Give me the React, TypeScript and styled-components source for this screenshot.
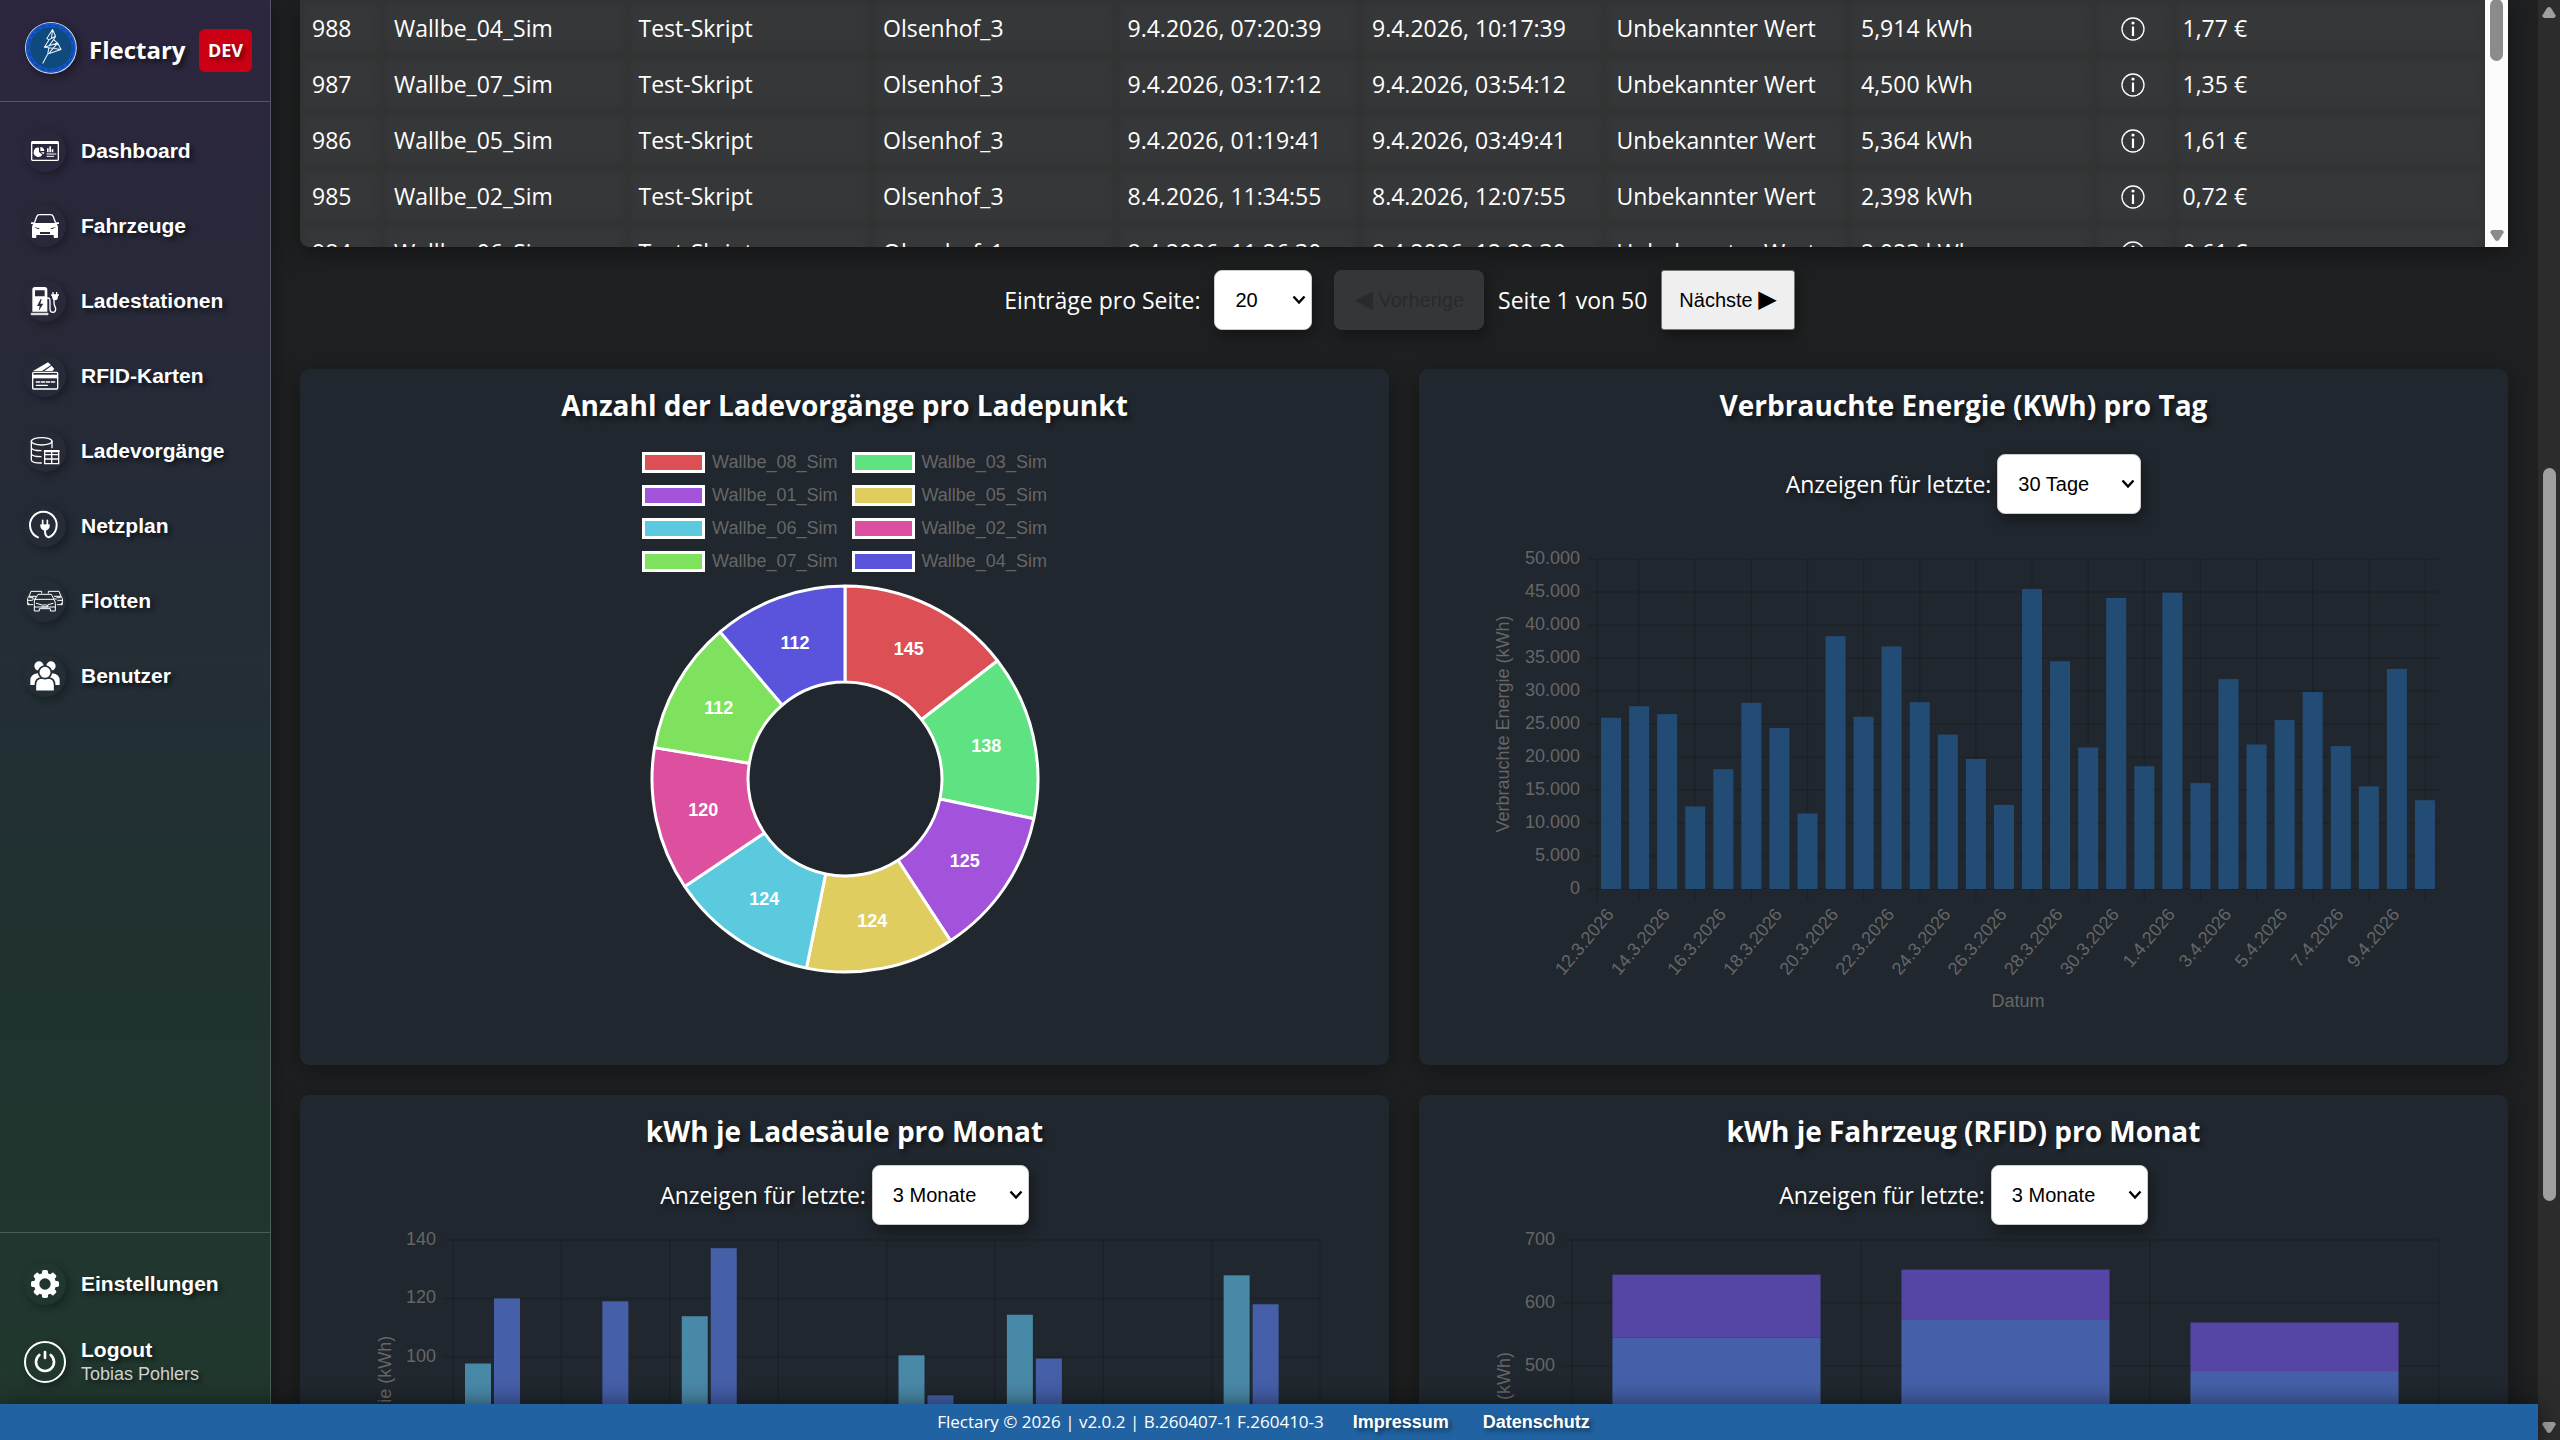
import React from "react";
import styled, { createGlobalStyle } from "styled-components";

const ui = `"Segoe UI", "Open Sans", "Noto Sans", sans-serif`;
const arial = `Arial, "Liberation Sans", sans-serif`;

const GlobalStyle = createGlobalStyle`
  *, *::before, *::after { box-sizing: border-box; }
  html, body { margin: 0; background: #1f2021; }
  body { font-family: ${ui}; font-size: 23px; line-height: 32px; color: #fff; }
`;

/* ---------- page frame ---------- */

const Page = styled.div`
  display: flex;
  height: 100vh;
  overflow: hidden;
`;

const Shell = styled.div`
  flex: 1;
  min-width: 0;
  display: flex;
  flex-direction: column;
`;

const Body = styled.div`
  flex: 1;
  min-height: 0;
  display: flex;
`;

const Footer = styled.footer`
  flex: none;
  display: flex;
  align-items: center;
  justify-content: center;
  height: 36px;
  padding-right: 6px;
  background: #2163a2;
  font-size: 17px;
  box-shadow: 0 0 24px rgba(0, 0, 0, 0.5);
  z-index: 1;
`;

const FooterLink = styled.a`
  margin-left: 29px;
  padding-right: 5px;
  color: #fff;
  font: bold 18px ${arial};
  text-decoration: none;
  text-shadow: 3px 3px 5px rgba(0, 0, 0, 0.5);
`;

const ScrollTrack = styled.div<{ $light?: boolean }>`
  flex: none;
  display: flex;
  flex-direction: column;
  align-items: center;
  width: ${(p) => (p.$light ? 23 : 22)}px;
  background: ${(p) => (p.$light ? "#fcfcfc" : "#2c2c2c")};
  color: ${(p) => (p.$light ? "#8b8b8b" : "#9f9f9f")};
`;

const ScrollThumb = styled.div<{ $grow: number }>`
  flex: ${(p) => p.$grow} 0 0;
  width: 13px;
  border-radius: 7px;
  background: currentColor;
`;

const ScrollGap = styled.div<{ $grow: number }>`
  flex: ${(p) => p.$grow} 0 0;
`;

const ScrollArrow = styled.svg`
  flex: none;
  width: 14px;
  height: 24px;
  fill: currentColor;
`;

/* ---------- sidebar ---------- */

const Sidebar = styled.aside`
  flex: none;
  width: 271px;
  display: flex;
  flex-direction: column;
  border-right: 1px solid rgba(255, 255, 255, 0.2);
  background: linear-gradient(180deg, #2c263e 0%, #262a37 30%, #222e34 50%, #20342e 80%, #21382e 100%);
  box-shadow: 0 0 20px rgba(0, 0, 0, 0.4);
  z-index: 1;
  font-family: ${arial};
`;

const Brand = styled.header`
  display: flex;
  align-items: center;
  height: 102px;
  padding: 0 0 0 25px;
  border-bottom: 1px solid rgba(255, 255, 255, 0.2);
`;

const BrandName = styled.span`
  flex: 1;
  padding: 0 0 2px 12px;
  font: bold 24px/32px ${ui};
  text-shadow: 3px 3px 5px rgba(0, 0, 0, 0.6);
`;

const DevBadge = styled.span`
  margin-right: 18px;
  padding: 0 9px;
  border-radius: 6px;
  background: #cc0014;
  font: bold 18px/43px ${ui};
  text-shadow: 3px 3px 5px rgba(0, 0, 0, 0.5);
`;

const Logo = styled.svg`
  flex: none;
  width: 52px;
  height: 52px;
  margin-bottom: 6px;
  border-radius: 50%;
  box-shadow: 3px 3px 8px rgba(0, 0, 0, 0.4);
`;

const Nav = styled.nav<{ $bottom?: boolean }>`
  display: flex;
  flex-direction: column;
  padding: ${(p) => (p.$bottom ? "13px 0 1px" : "11px 0 0")};
  margin-top: ${(p) => (p.$bottom ? "auto" : "0")};
  border-top: ${(p) => (p.$bottom ? "1px solid rgba(255, 255, 255, 0.2)" : "0")};
`;

const NavLink = styled.a<{ $tall?: boolean }>`
  display: flex;
  align-items: center;
  gap: 15px;
  height: ${(p) => (p.$tall ? 82 : 75)}px;
  padding-left: 24px;
  color: #fff;
  font-weight: bold;
  font-size: 21px;
  line-height: 24px;
  text-decoration: none;
  text-shadow: 3px 3px 5px rgba(0, 0, 0, 0.6);
`;

const IconDisc = styled.span<{ $ring?: boolean }>`
  flex: none;
  display: flex;
  align-items: center;
  justify-content: center;
  width: 42px;
  height: 42px;
  border-radius: 50%;
  border: ${(p) => (p.$ring ? "2px solid #fff" : "0")};
  box-shadow: 3px 3px 8px rgba(0, 0, 0, 0.35);

  svg { height: 28px; overflow: visible; }
`;

const UserName = styled.small`
  display: block;
  color: #cdd2cf;
  font-size: 18px;
  font-weight: normal;
`;

/* ---------- content ---------- */

const Main = styled.main`
  flex: 1;
  min-width: 0;
  overflow: hidden;
  padding: 0 30px 0 29px;
`;

const TableFrame = styled.div`
  display: flex;
  height: 248px;
  margin-top: -1px;
  overflow: hidden;
  border-radius: 0 0 0 9px;
  box-shadow: 0 6px 24px rgba(0, 0, 0, 0.4);
`;

const TableClip = styled.div`
  flex: 1;
  overflow: hidden;
`;

const Table = styled.table`
  width: 100%;
  table-layout: fixed;
  border-collapse: collapse;
`;

const Col = styled.col<{ $w?: string }>`
  width: ${(p) => p.$w ?? "auto"};
`;

const Cell = styled.td<{ $center?: boolean }>`
  height: 56px;
  padding: 2px ${(p) => (p.$center ? 14 : 12)}px 0 12px;
  background: #363738;
  box-shadow: inset 0 0 14px rgba(10, 14, 10, 0.13);
  text-align: ${(p) => (p.$center ? "center" : "left")};
  white-space: nowrap;

  svg { display: inline-block; vertical-align: -4px; }
  &:last-child { padding-left: 9px; }
`;

const Pager = styled.div`
  display: flex;
  align-items: center;
  justify-content: center;
  gap: 14px;
  padding: 23px 9px 39px 0;
`;

const PagerButton = styled.button`
  height: 60px;
  padding: 0 17px;
  border: 1px solid #767676;
  border-radius: 3px;
  background: #efefef;
  color: #000;
  font: 20px ${arial};
  box-shadow: 3px 6px 15px rgba(0, 0, 0, 0.4);

  &:disabled {
    margin-left: 8px;
    padding: 0 20px;
    border: 0;
    border-radius: 8px;
    background: #353638;
    color: #292a2b;
  }
`;

const Arrowhead = styled.span`
  font-family: "DejaVu Sans", sans-serif;
  font-size: 24px;
  line-height: 20px;
`;

const SelectBox = styled.span`
  display: inline-grid;
  align-items: center;
`;

const Select = styled.select<{ $w: number }>`
  grid-area: 1 / 1;
  appearance: none;
  width: ${(p) => p.$w}px;
  height: 60px;
  padding: 0 20px;
  border: 1px solid #ccc;
  border-radius: 8px;
  background: #fff;
  color: #000;
  font: 20px ${arial};
  box-shadow: 3px 6px 15px rgba(0, 0, 0, 0.4);
`;

const Chevron = styled.svg`
  grid-area: 1 / 1;
  justify-self: end;
  width: 14px;
  height: 10px;
  margin-right: 6px;
  pointer-events: none;
`;

const Cards = styled.div`
  display: grid;
  grid-template-columns: 1fr 1fr;
  gap: 30px;
`;

const Card = styled.section`
  min-height: 696px;
  padding-top: 18px;
  border-radius: 9px;
  background: #20272e;
  box-shadow: 0 6px 24px rgba(0, 0, 0, 0.4);
`;

const CardTitle = styled.h3`
  margin: 0;
  text-align: center;
  font-size: 28px;
  line-height: 36px;
  text-shadow: 3px 3px 5px rgba(0, 0, 0, 0.5);
`;

const Range = styled.div<{ $roomy?: boolean }>`
  display: flex;
  align-items: center;
  justify-content: center;
  gap: 6px;
  padding: ${(p) => (p.$roomy ? 31 : 16)}px 0 ${(p) => (p.$roomy ? 15 : 0)}px;
  text-shadow: 3px 3px 5px rgba(0, 0, 0, 0.5);
`;

const Chart = styled.svg`
  display: block;
  width: 100%;
  overflow: visible;
  font: 18px ${arial};

  text { fill: #666; }
`;

const Legend = styled.ul`
  display: grid;
  grid-template-columns: auto auto;
  justify-content: center;
  column-gap: 14px;
  margin: 23px 0 6px;
  padding: 0;
  list-style: none;
  font: 18px/33px ${arial};
  color: #666;
`;

const LegendItem = styled.li`
  display: flex;
  align-items: center;
  gap: 7px;
`;

const Swatch = styled.span<{ $color: string }>`
  width: 63px;
  height: 21px;
  border: 3px solid #fff;
  background: ${(p) => p.$color};
`;

const Donut = styled.svg`
  display: block;
  width: 390px;
  margin: 0 auto;
  font: bold 18px ${arial};
  text-anchor: middle;
`;

/* ---------- icons ---------- */

const line = { fill: "none", stroke: "#fff", strokeLinecap: "round", strokeLinejoin: "round" } as const;

const DashboardIcon = () => (
  <svg viewBox="0 0 84 84" fill="#fff">
    <rect x="2" y="14" width="80" height="56" rx="3" {...line} strokeWidth="4" />
    <path d="M2 14h80v7H2z" />
    <path d="M24 32v13l10 8a14 14 0 1 1-10-21z" />
    <path d="M28 30a13 13 0 0 1 12 12H28zM30 46h10a13 13 0 0 1-3 6z" />
    <path d="M48 34h5v12h-5zM55 28h5v18h-5zM62 37h5v9h-5z" />
    <path d="M48 51h27M48 58h20" {...line} strokeWidth="3" />
  </svg>
);

const CarIcon = () => (
  <svg viewBox="0 0 84 84" fill="#fff">
    <path d="M11 31 17 14Q19 8 25 8H59Q65 8 67 14L73 31" {...line} strokeWidth="4" />
    <path
      fillRule="evenodd"
      d="M0 31h9l2 2h62l2-2h9v5h-6l3 8v31a3 3 0 0 1-3 3h-7a3 3 0 0 1-3-3v-6H16v6a3 3 0 0 1-3 3H6a3 3 0 0 1-3-3V44l3-8H0zM8 45l14 7 4-3zM76 45l-14 7-4-3zM27 60v6h30v-6z"
    />
  </svg>
);

const StationIcon = () => (
  <svg viewBox="0 0 84 84" fill="#fff">
    <path
      fillRule="evenodd"
      d="M4 74V8a8 8 0 0 1 8-8h29a8 8 0 0 1 8 8v66zM12 10v18h29V10zM29 36 18 57h8l-3 15 14-22h-9l4-14z"
    />
    <path d="M2 79h49v4H2z" {...line} strokeWidth="3" />
    <path d="M49 33c8 0 8 4 8 12v20c0 8 4 11 9 11s8-4 8-10-5-10-5-17v-12" {...line} strokeWidth="4" />
    <path d="M60 22h24v4h-3c0 9-3 14-9 14s-9-5-9-14h-3zM64 15h4v8h-4zM75 15h4v8h-4z" />
  </svg>
);

const CardsIcon = () => (
  <svg viewBox="0 0 84 84" fill="#fff">
    <path d="M6 27 51 1l9 8-27 18zM40 27 62 11l8 10-6 6z" />
    <rect x="5" y="31" width="75" height="50" rx="3" {...line} strokeWidth="4" />
    <path d="M5 38h75v11H5z" />
    <path d="M16 60h10M31 60h10M46 60h10M61 60h10M16 70h33" {...line} strokeWidth="4" />
  </svg>
);

const DatabaseIcon = () => (
  <svg viewBox="0 0 84 84" {...line} strokeWidth="4">
    <ellipse cx="32" cy="13" rx="31" ry="11" />
    <path d="M1 13v55c0 6 12 10 30 10M1 33c2 5 14 8 29 8M1 51c2 5 14 8 29 8M63 13v19" />
    <path d="M41 41h42v39H41zM41 53h42M41 66h42M62 45v35" />
    <path d="M41 43h42" strokeWidth="6" />
  </svg>
);

const GridPlanIcon = () => (
  <svg viewBox="0 0 84 84" {...line} strokeWidth="6">
    <path d="M21 76A40 40 0 1 1 53 76C44 74 42 68 42 56" />
    <path d="M35 25v13M49 25v13" strokeWidth="5" />
    <path d="M29 38h26v4c0 8-6 13-13 13s-13-5-13-13z" fill="#fff" strokeWidth="2" />
  </svg>
);

const FleetIcon = () => (
  <svg viewBox="0 0 108 84" {...line} strokeWidth="3">
    <path d="M28 30 33 22H73L80 35M28 30l-4 7M24 37h56M24 37q-3 5-2 12v23h15v-7h33v7h15V49q1-7-5-12M22 60h63M28 49l14 4M78 49l-14 4M44 54h18v6H44M16 36h6M82 36h6" />
    <path d="M44 18V13H12L6 28h20M6 28l-4 6v19h15M5 53v-4M2 40h14M8 32h10" />
    <path d="M64 18V13h32l6 15H82M102 28l4 6v19H91M103 53v-4M106 40H92M100 32H90" />
  </svg>
);

const UsersIcon = () => (
  <svg viewBox="0 0 84 84" fill="#fff">
    <circle cx="24" cy="12" r="14" />
    <circle cx="60" cy="12" r="14" />
    <path d="M-2 69V56q0-20 22-22h8l10 20-16 15zM86 69V56q0-20-22-22h-8L46 54l16 15z" />
    <g stroke="#232d35" strokeWidth="5">
      <path d="M13 88V70q0-22 19-22h20q19 0 19 22v18z" />
      <circle cx="42" cy="31" r="19" />
    </g>
  </svg>
);

const GearIcon = () => (
  <svg viewBox="0 0 84 84" fill="#fff">
    {[0, 45, 90, 135].map((a) => (
      <rect key={a} x="33" y="0" width="18" height="84" rx="5" transform={`rotate(${a} 42 42)`} />
    ))}
    <circle cx="42" cy="42" r="33" />
    <circle cx="42" cy="42" r="17" fill="#20352e" />
  </svg>
);

const PowerIcon = () => (
  <svg viewBox="0 0 84 84" {...line} strokeWidth="8">
    <path d="M25 21a27 27 0 1 0 34 0M42 12v18" />
  </svg>
);

const InfoIcon = () => (
  <svg width="24" height="24" viewBox="0 0 24 24" role="img" aria-label="Info">
    <circle cx="12" cy="12" r="11" fill="none" stroke="#fff" strokeWidth="1.3" />
    <path d="M12 9.500v9.500" stroke="#fff" strokeWidth="2.200" />
    <circle cx="12" cy="6" r="1.600" fill="#fff" />
  </svg>
);

/* ---------- data ---------- */

const nav = [
  ["Dashboard", DashboardIcon],
  ["Fahrzeuge", CarIcon],
  ["Ladestationen", StationIcon],
  ["RFID-Karten", CardsIcon],
  ["Ladevorgänge", DatabaseIcon],
  ["Netzplan", GridPlanIcon],
  ["Flotten", FleetIcon],
  ["Benutzer", UsersIcon],
] as const;

const rows = [
  ["988", "Wallbe_04_Sim", "Test-Skript", "Olsenhof_3", "9.4.2026, 07:20:39", "9.4.2026, 10:17:39", "Unbekannter Wert", "5,914 kWh", "1,77 €"],
  ["987", "Wallbe_07_Sim", "Test-Skript", "Olsenhof_3", "9.4.2026, 03:17:12", "9.4.2026, 03:54:12", "Unbekannter Wert", "4,500 kWh", "1,35 €"],
  ["986", "Wallbe_05_Sim", "Test-Skript", "Olsenhof_3", "9.4.2026, 01:19:41", "9.4.2026, 03:49:41", "Unbekannter Wert", "5,364 kWh", "1,61 €"],
  ["985", "Wallbe_02_Sim", "Test-Skript", "Olsenhof_3", "8.4.2026, 11:34:55", "8.4.2026, 12:07:55", "Unbekannter Wert", "2,398 kWh", "0,72 €"],
  ["984", "Wallbe_06_Sim", "Test-Skript", "Olsenhof_1", "8.4.2026, 11:26:30", "8.4.2026, 12:22:30", "Unbekannter Wert", "2,023 kWh", "0,61 €"],
];

const slices = [
  { name: "Wallbe_08_Sim", value: 145, color: "#dc4f55" },
  { name: "Wallbe_03_Sim", value: 138, color: "#5fe281" },
  { name: "Wallbe_01_Sim", value: 125, color: "#a352dc" },
  { name: "Wallbe_05_Sim", value: 124, color: "#dfcd60" },
  { name: "Wallbe_06_Sim", value: 124, color: "#5bcadf" },
  { name: "Wallbe_02_Sim", value: 120, color: "#dd509f" },
  { name: "Wallbe_07_Sim", value: 112, color: "#7ee25f" },
  { name: "Wallbe_04_Sim", value: 112, color: "#5a53dc" },
];

const perDay = [
  25950, 27700, 26500, 12500, 18150, 28200, 24400, 11450, 38300, 26100,
  36750, 28300, 23400, 19700, 12750, 45450, 34500, 21450, 44100, 18600,
  44900, 16050, 31800, 21900, 25600, 29850, 21650, 15550, 33350, 13450,
];

const dayLabels = [
  "12.3.2026", "14.3.2026", "16.3.2026", "18.3.2026", "20.3.2026",
  "22.3.2026", "24.3.2026", "26.3.2026", "28.3.2026", "30.3.2026",
  "1.4.2026", "3.4.2026", "5.4.2026", "7.4.2026", "9.4.2026",
];

const perStation: (number | null)[][] = [
  [97.7, 120], [null, 119], [113.9, 137.2], [null, null],
  [100.5, 86.8], [114.4, 99.4], [null, null], [127.9, 118],
];

const perVehicle = [[545, 645], [573, 653], [492, 569]];

/* ---------- charts ---------- */

const polar = (r: number, turn: number) => {
  const a = turn * Math.PI * 2 - Math.PI / 2;
  return [195 + r * Math.cos(a), 195 + r * Math.sin(a)];
};

function DonutChart() {
  const total = slices.reduce((s, d) => s + d.value, 0);
  let at = 0;
  return (
    <Donut viewBox="0 0 390 390">
      {slices.map((d) => {
        const from = at / total;
        const to = (at + d.value) / total;
        at += d.value;
        const [ax, ay] = polar(193, from);
        const [bx, by] = polar(193, to);
        const [cx, cy] = polar(97, to);
        const [dx, dy] = polar(97, from);
        const [tx, ty] = polar(145, (from + to) / 2);
        return (
          <g key={d.name}>
            <path
              d={`M${ax} ${ay}A193 193 0 0 1 ${bx} ${by}L${cx} ${cy}A97 97 0 0 0 ${dx} ${dy}Z`}
              fill={d.color}
              stroke="#fff"
              strokeWidth="3"
              strokeLinejoin="bevel"
            />
            <text x={tx} y={ty + 6} fill="#fff">{d.value}</text>
          </g>
        );
      })}
    </Donut>
  );
}

const gridStroke = { stroke: "#000", strokeOpacity: 0.13, strokeWidth: 1.5 };

type AxisProps = {
  left: number; top: number; step: number; ticks: string[]; columns: number[]; titleX: number; below?: number;
};

function Axes({ left, top, step, ticks, columns, titleX, below = 12 }: AxisProps) {
  const right = 1020;
  const bottom = top + step * (ticks.length - 1);
  const mid = (top + bottom) / 2;
  return (
    <g>
      {ticks.map((t, i) => (
        <g key={t}>
          <line x1={left - 9} x2={right} y1={top + i * step} y2={top + i * step} {...gridStroke} />
          <text x={left - 17} y={top + i * step + 5} textAnchor="end">{t}</text>
        </g>
      ))}
      {columns.map((x) => (
        <line key={x} x1={x} x2={x} y1={top} y2={bottom + below} {...gridStroke} />
      ))}
      <text transform={`translate(${titleX} ${mid}) rotate(-90)`} y="6" textAnchor="middle">
        Verbrauchte Energie (kWh)
      </text>
    </g>
  );
}

function DayChart() {
  const left = 178, top = 30, step = 33, pitch = 842 / 30, bottom = 360;
  const center = (i: number) => left + pitch * (i + 0.5);
  return (
    <Chart viewBox="0 0 1089 500">
      <Axes
        left={left} top={top} step={step} titleX={84}
        ticks={["50.000", "45.000", "40.000", "35.000", "30.000", "25.000", "20.000", "15.000", "10.000", "5.000", "0"]}
        columns={[left, ...dayLabels.map((_, i) => center(i * 2 + 1))]}
      />
      {perDay.map((v, i) => {
        const h = (v / 50000) * 330;
        return <rect key={i} x={center(i) - 10} y={bottom - h} width="20" height={h} fill="#234c75" />;
      })}
      {dayLabels.map((t, i) => (
        <text key={t} transform={`translate(${center(i * 2) - 1} 382) rotate(-50)`} y="6" textAnchor="end">{t}</text>
      ))}
      <text x="599" y="478" textAnchor="middle">Datum</text>
    </Chart>
  );
}

function StationChart() {
  const left = 153, pitch = 867 / 8, top = 15, unit = 58.4 / 20, bottom = top + 140 * unit;
  return (
    <Chart viewBox="0 0 1089 540">
      <Axes
        left={left} top={top} step={58.4} titleX={85}
        ticks={["140", "120", "100", "80", "60", "40", "20", "0"]}
        columns={[0, 1, 2, 3, 4, 5, 6, 7, 8].map((i) => left + i * pitch)}
      />
      {perStation.map((group, g) =>
        group.map((v, i) =>
          v === null ? null : (
            <rect
              key={`${g}-${i}`}
              x={left + g * pitch + 12 + i * 29}
              y={bottom - v * unit}
              width="26"
              height={v * unit}
              fill={i === 0 ? "#4989a8" : "#455fa9"}
            />
          ),
        ),
      )}
    </Chart>
  );
}

function VehicleChart() {
  const left = 153, pitch = 867 / 3, top = 15, unit = 0.63, bottom = top + 700 * unit;
  return (
    <Chart viewBox="0 0 1089 540">
      <Axes
        left={left} top={top} step={63} titleX={85}
        ticks={["700", "600", "500", "400", "300", "200", "100", "0"]}
        columns={[0, 1, 2, 3].map((i) => left + i * pitch)}
      />
      {perVehicle.map(([low, high], g) => {
        const x = left + g * pitch + pitch * 0.14;
        return (
          <g key={g}>
            <rect x={x} y={bottom - low * unit} width={pitch * 0.72} height={low * unit} fill="#4560a9" />
            <rect x={x} y={bottom - high * unit} width={pitch * 0.72} height={(high - low) * unit} fill="#5546a6" />
          </g>
        );
      })}
    </Chart>
  );
}

/* ---------- shared controls ---------- */

function Dropdown({ id, value, width }: { id: string; value: string; width: number }) {
  return (
    <SelectBox>
      <Select id={id} $w={width} defaultValue={value}>
        <option>{value}</option>
      </Select>
      <Chevron viewBox="0 0 14 10">
        <path d="M1.500 1.500 7 7.500 12.500 1.500" fill="none" stroke="#000" strokeWidth="2.400" />
      </Chevron>
    </SelectBox>
  );
}

function RangePicker({ id, value, width, roomy }: { id: string; value: string; width: number; roomy?: boolean }) {
  return (
    <Range $roomy={roomy}>
      <label htmlFor={id}>Anzeigen für letzte:</label>
      <Dropdown id={id} value={value} width={width} />
    </Range>
  );
}

export default function App() {
  return (
    <Page>
      <GlobalStyle />
      <Shell>
        <Body>
          <Sidebar>
            <Brand>
              <Logo viewBox="0 0 153 153">
                <circle cx="76" cy="76" r="75" fill="#0f4a7e" stroke="#c3cfe6" strokeWidth="4" />
                <circle cx="76" cy="76" r="67" fill="none" stroke="#1457d0" strokeWidth="11" />
                <circle cx="76" cy="76" r="66" fill="none" stroke="#0d3f8f" strokeWidth="3" strokeDasharray="14 6" />
                <path
                  d="M52 122 67 94 106 81 96 62 84 52 90 42 81 22 64 49 71 52 57 74 70 76 67 94M90 42 71 52M81 22 78 48M96 62 57 74M84 52 71 70M106 81 70 76M96 62 72 90"
                  fill="none" stroke="#eef4fb" strokeWidth="3" strokeLinejoin="round"
                />
              </Logo>
              <BrandName>Flectary</BrandName>
              <DevBadge>DEV</DevBadge>
            </Brand>
            <Nav>
              {nav.map(([label, Icon]) => (
                <NavLink key={label} href="#">
                  <IconDisc><Icon /></IconDisc>
                  {label}
                </NavLink>
              ))}
            </Nav>
            <Nav $bottom>
              <NavLink href="#">
                <IconDisc><GearIcon /></IconDisc>
                Einstellungen
              </NavLink>
              <NavLink href="#" $tall>
                <IconDisc $ring><PowerIcon /></IconDisc>
                <span>
                  Logout
                  <UserName>Tobias Pohlers</UserName>
                </span>
              </NavLink>
            </Nav>
          </Sidebar>

          <Main>
            <TableFrame>
              <TableClip>
                <Table>
                  <colgroup>
                    <Col $w="82px" />
                    {[0, 1, 2, 3, 4, 5, 6].map((i) => <Col key={i} $w="11.19%" />)}
                    <Col $w="80px" />
                    <Col />
                  </colgroup>
                  <tbody>
                    {rows.map((r) => (
                      <tr key={r[0]}>
                        {r.slice(0, 8).map((c, i) => <Cell key={i}>{c}</Cell>)}
                        <Cell $center><InfoIcon /></Cell>
                        <Cell>{r[8]}</Cell>
                      </tr>
                    ))}
                  </tbody>
                </Table>
              </TableClip>
              <ScrollTrack $light>
                <ScrollThumb $grow={62} />
                <ScrollGap $grow={162} />
                <ScrollArrow viewBox="0 0 14 24"><path d="M2 7h10l2 2-5 8q-2 2-4 0L0 9z" /></ScrollArrow>
              </ScrollTrack>
            </TableFrame>

            <Pager>
              <label htmlFor="page-size">Einträge pro Seite:</label>
              <Dropdown id="page-size" value="20" width={98} />
              <PagerButton disabled><Arrowhead>◀</Arrowhead> Vorherige</PagerButton>
              <span>Seite 1 von 50</span>
              <PagerButton>Nächste <Arrowhead>▶</Arrowhead></PagerButton>
            </Pager>

            <Cards>
              <Card>
                <CardTitle>Anzahl der Ladevorgänge pro Ladepunkt</CardTitle>
                <Legend>
                  {slices.map((s) => (
                    <LegendItem key={s.name}>
                      <Swatch $color={s.color} />
                      {s.name}
                    </LegendItem>
                  ))}
                </Legend>
                <DonutChart />
              </Card>
              <Card>
                <CardTitle>Verbrauchte Energie (KWh) pro Tag</CardTitle>
                <RangePicker id="range-day" value="30 Tage" width={144} roomy />
                <DayChart />
              </Card>
              <Card>
                <CardTitle>kWh je Ladesäule pro Monat</CardTitle>
                <RangePicker id="range-station" value="3 Monate" width={157} />
                <StationChart />
              </Card>
              <Card>
                <CardTitle>kWh je Fahrzeug (RFID) pro Monat</CardTitle>
                <RangePicker id="range-vehicle" value="3 Monate" width={157} />
                <VehicleChart />
              </Card>
            </Cards>
          </Main>
        </Body>
        <Footer>
          <span>Flectary © 2026 | v2.0.2 | B.260407-1 F.260410-3</span>
          <FooterLink href="#">Impressum</FooterLink>
          <FooterLink href="#">Datenschutz</FooterLink>
        </Footer>
      </Shell>
      <ScrollTrack>
        <ScrollArrow viewBox="0 0 14 24"><path d="M2 18h10l2-2-5-8q-2-2-4 0L0 16z" /></ScrollArrow>
        <ScrollGap $grow={444} />
        <ScrollThumb $grow={733} />
        <ScrollGap $grow={215} />
        <ScrollArrow viewBox="0 0 14 24"><path d="M2 6h10l2 2-5 8q-2 2-4 0L0 8z" /></ScrollArrow>
      </ScrollTrack>
    </Page>
  );
}
